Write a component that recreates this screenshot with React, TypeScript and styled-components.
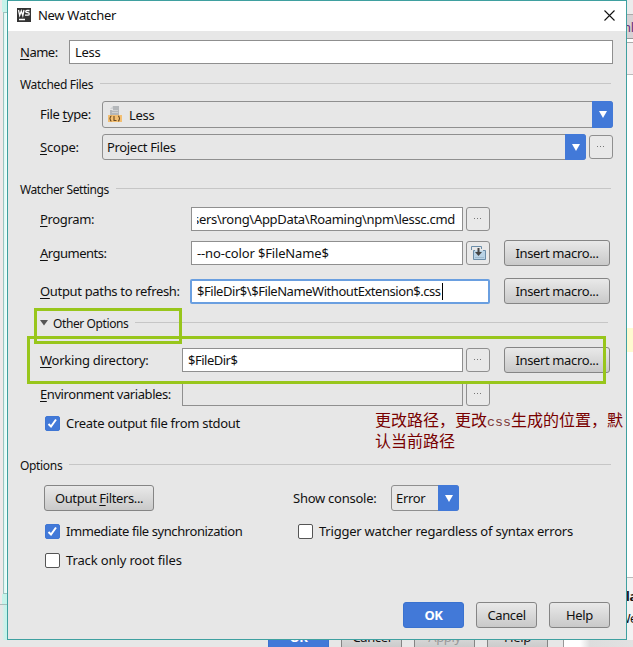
import React from 'react';
import styled, { createGlobalStyle, css } from 'styled-components';

const Global = createGlobalStyle`
  *, *::before, *::after { box-sizing: border-box; }
  body { margin: 0; overflow: hidden; background: #e7e7e7; }
`;

const Desktop = styled.div`
  width: 633px;
  height: 647px;
  overflow: hidden;
  display: grid;
  grid-template-columns: 7px 620px 6px;
  grid-template-rows: 640px 7px;
  background: #e7e7e7;
  color: #111;
  font: 13px/18px 'Noto Sans', 'Noto Sans CJK SC', sans-serif;
  letter-spacing: -0.33px;
  white-space: pre;
`;

const LeftEdge = styled.div`
  display: flex;
  flex-direction: column;
  background: #efe9ea;
`;
const LeftCap = styled.div<{ $h: number }>`
  height: ${p => p.$h}px;
  margin-left: 2px;
  background: #c6f3ea;
`;
const LeftPane = styled.div`
  flex: 1;
  margin-left: 3px;
  border: solid #9cc4bf;
  border-width: 1px 0 1px 1px;
  background: linear-gradient(90deg, #d9f8f3, #f4fefc);
`;
const LeftFoot = styled.div`
  height: 36px;
  border-top: 1px solid #a9bdba;
  background: linear-gradient(90deg, #e7e7e7 2px, #c6f3ea 5px);
`;

const RightEdge = styled.div`
  display: flex;
  flex-direction: column;
  overflow: hidden;
  background: #fff;
`;
const Strip = styled.div<{ $h: number; $bg: string; $line?: string }>`
  flex: none;
  height: ${p => p.$h}px;
  background: ${p => p.$bg};
  ${p => p.$line && css`border-bottom: 1px solid ${p.$line};`}
`;
const TabStrip = styled(Strip)`
  color: #6a2f78;
  line-height: 24px;
  text-indent: -4px;
`;
const Balloon = styled.div`
  flex: 1;
  border-top: 1px solid #bbb;
  background: #f3f3f3;
  padding-top: 8px;
  font-size: 12.5px;
  line-height: 22px;
`;
const BalloonTitle = styled.div`
  font-weight: 700;
  text-indent: -1px;
`;
const BalloonText = styled.div`
  text-indent: -8px;
`;

const Behind = styled.div`
  grid-column: 1 / -1;
  overflow: hidden;
  display: flex;
  align-items: flex-start;
  gap: 12px;
  padding-left: 268px;
  background: linear-gradient(90deg, #e7e7e7 563px, #999 563px, #999 564px, #fff 564px, #fff 580px, #ddd 590px, #e2e2e2);
`;

const Dialog = styled.main`
  position: relative;
  border: 1px solid #3fa0a0;
  background: #e7e7e7;
  display: flex;
  flex-direction: column;
`;
const TitleBar = styled.header`
  height: 30px;
  flex: none;
  padding: 0 11px 2px 9px;
  display: flex;
  align-items: center;
  background: #fff;
`;
const Title = styled.h1`
  margin: 0 auto 0 7px;
  font: inherit;
  letter-spacing: -0.3px;
`;

const Body = styled.div`
  display: flex;
  flex-direction: column;
  padding: 0 13px 0 12px;
`;
const Row = styled.div<{ $top: number; $h: number; $indent?: number; $gap?: number }>`
  display: flex;
  align-items: center;
  height: ${p => p.$h}px;
  margin-top: ${p => p.$top}px;
  padding-left: ${p => p.$indent ?? 0}px;
  gap: ${p => p.$gap ?? 0}px;
`;
const Label = styled.label<{ $w?: number; $ls?: number }>`
  flex: none;
  width: ${p => (p.$w ? `${p.$w}px` : 'auto')};
  padding-bottom: 1px;
  letter-spacing: ${p => p.$ls ?? -0.33}px;
`;
const U = styled.span`
  text-decoration: underline;
  text-underline-offset: 2px;
  text-decoration-thickness: 1px;
  text-decoration-skip-ink: none;
`;
const Heading = styled.h2<{ $ls?: number }>`
  margin: 0;
  padding-top: 1px;
  font: inherit;
  font-size: 12px;
  letter-spacing: ${p => p.$ls ?? -0.33}px;
`;
const Rule = styled.div<{ $end?: number }>`
  flex: 1;
  height: 1px;
  margin: 0 ${p => p.$end ?? 2}px 1px 7px;
  background: #c6c6c6;
`;

const Field = styled.div<{ $w: number; $focus?: boolean; $off?: boolean; $ls?: number }>`
  flex: none;
  width: ${p => p.$w}px;
  height: 24px;
  padding-left: 5px;
  display: flex;
  align-items: center;
  overflow: hidden;
  border: 1px solid #8f8f8f;
  background: ${p => (p.$off ? '#e7e7e7' : '#fff')};
  letter-spacing: ${p => p.$ls ?? -0.33}px;
  ${p => p.$focus && css`
    height: 25px;
    border: 2px solid #6a9fe0;
    border-radius: 2px;
  `}
`;
const Tail = styled(Field)`
  justify-content: flex-end;
  padding-right: 7px;
`;
const ClippedText = styled.span`
  overflow: hidden;
  display: flex;
  justify-content: flex-end;
  width: 258px;
`;
const Caret = styled.i`
  width: 1px;
  height: 17px;
  margin-left: 1px;
  background: #000;
`;
const Combo = styled.div<{ $w: number; $h: number }>`
  flex: none;
  display: flex;
  align-items: center;
  width: ${p => p.$w}px;
  height: ${p => p.$h}px;
  padding-left: 4px;
  border: 1px solid #8f8f8f;
  border-radius: 3px;
`;
const ComboArrow = styled.span`
  align-self: stretch;
  width: 21px;
  margin: -1px -1px -1px auto;
  display: grid;
  place-items: center;
  background: #4279d8;
  border-radius: 0 3px 3px 0;
`;
const SmallButton = styled.button`
  flex: none;
  width: 24px;
  height: 24px;
  padding: 0;
  display: grid;
  place-items: center;
  border: 1px solid #8f8f8f;
  border-radius: 3px;
  background: #e9e9e9;
`;
const Button = styled.button<{ $w: number; $primary?: boolean; $faded?: boolean }>`
  flex: none;
  width: ${p => p.$w}px;
  height: 26px;
  padding: 0 0 1px;
  border: 1px solid #858585;
  border-radius: 3px;
  background: linear-gradient(#e9e9e9, #c9c9c9);
  color: ${p => (p.$faded ? '#999' : '#111')};
  font: inherit;
  letter-spacing: -0.37px;
  ${p => p.$primary && css`
    border-color: #3a72cf;
    background: #4279d8;
    color: #fff;
    font-weight: 700;
  `}
`;
const HiddenButton = styled(Button)`
  margin-top: -16px;
`;
const Box = styled.span<{ $on?: boolean }>`
  flex: none;
  width: 15px;
  height: 15px;
  margin-right: 6px;
  display: grid;
  place-items: center;
  border: 1px solid ${p => (p.$on ? '#3f76d4' : '#555')};
  border-radius: 2px;
  background: ${p => (p.$on ? '#4279d8' : '#fff')};
`;
const Spacer = styled.div<{ $w: number }>`
  flex: none;
  width: ${p => p.$w}px;
`;

const Mark = styled.div<{ $x: number; $y: number; $w: number; $h: number }>`
  position: absolute;
  left: ${p => p.$x}px;
  top: ${p => p.$y}px;
  width: ${p => p.$w}px;
  height: ${p => p.$h}px;
  border: 3px solid #98c61c;
`;
const Note = styled.p`
  position: absolute;
  left: 367px;
  top: 411px;
  margin: 0;
  color: #780000;
  font: 16px/20px 'Liberation Mono', 'Noto Sans CJK SC', monospace;
  letter-spacing: 0;
`;
const Latin = styled.span`
  font-size: 13.33px;
  color: #7c3838;
`;

const LogoIcon = () => (
  <svg width="14" height="14" viewBox="0 0 14 14" fill="none" stroke="#fff" strokeWidth="1.3">
    <rect width="14" height="14" fill="#333" stroke="none" />
    <path d="M1.500 2l1.200 5.500L4.300 3l1.500 4.500L7 2M12.500 2.500H10c-1.700 0-1.700 2.200 0 2.200h.8c1.900 0 1.900 2.500 0 2.500H8M2 11.500h6" />
  </svg>
);
const CloseIcon = () => (
  <svg width="11" height="11" viewBox="0 0 11 11" stroke="#111" strokeWidth="1.1">
    <path d="M.5 .5l10 10M10.500 .5l-10 10" />
  </svg>
);
const LessIcon = () => (
  <svg width="16" height="17" viewBox="0 0 16 17" fill="none">
    <path d="M6 0h6v9H3V4h3z" fill="#b4b7ba" />
    <path d="M3 3l3-3v3z" fill="#d0d2d4" />
    <path d="M5 4.500h6M5 6.500h6" stroke="#cfd1d3" />
    <rect x="1" y="9" width="14" height="7" fill="#f3bf73" />
    <path d="M4.500 10c-2 0-.5 2.500-2 2.500 1.500 0 0 2.500 2 2.500M7 10v4.500h2.500M11 10c2 0 .5 2.500 2 2.500-1.500 0 0 2.500-2 2.500" stroke="#6b4a20" strokeWidth="1.1" />
  </svg>
);
const Down = () => (
  <svg width="8" height="7" viewBox="0 0 8 7"><path d="M0 0h8L4 7z" fill="#fff" /></svg>
);
const Dots = () => (
  <svg width="10" height="2" viewBox="0 0 10 2" fill="#777"><path d="M1 0h1v1H1zM4 0h1v1h-1zM7 0h1v1H7z" /></svg>
);
const InsertIcon = () => (
  <svg width="15" height="15" viewBox="0 0 15 15" fill="none">
    <path d="M.5 4V.5h10V3" stroke="#6b8da8" />
    <path d="M4 4.500H2.500v9h12v-9H12" stroke="#6b8da8" fill="#b9d3e6" />
    <path d="M4 11.500h9" stroke="#9fbbd0" />
    <path d="M7.500 2v4.500" stroke="#444" strokeWidth="2" />
    <path d="M4 6h7L7.500 10z" fill="#444" />
  </svg>
);
const Check = () => (
  <svg width="11" height="11" viewBox="0 0 11 11" fill="none" stroke="#fff" strokeWidth="2">
    <path d="M1.500 6l2.500 2.500L9 1.500" />
  </svg>
);
const Disclosure = styled.svg`
  margin-right: 5px;
`;

const Mnemonic = ({ text, at = 0 }: { text: string; at?: number }) => (
  <>{text.slice(0, at)}<U>{text[at]}</U>{text.slice(at + 1)}</>
);
const More = () => <SmallButton aria-label="More"><Dots /></SmallButton>;
const InsertMacro = () => <Button $w={106}>Insert macro...</Button>;

export default function App() {
  return (
    <>
      <Global />
      <Desktop>
        <LeftEdge>
          <LeftCap $h={12} />
          <LeftPane />
          <LeftCap $h={10} />
          <LeftFoot />
        </LeftEdge>

        <Dialog>
          <TitleBar>
            <LogoIcon />
            <Title>New Watcher</Title>
            <CloseIcon />
          </TitleBar>
          <Body>
            <Row $top={9} $h={24}>
              <Label $w={49} $ls={-0.5}><Mnemonic text="Name:" /></Label>
              <Field $w={544}>Less</Field>
            </Row>
            <Row $top={11} $h={18}><Heading>Watched Files</Heading><Rule /></Row>
            <Row $top={8} $h={27} $indent={20}>
              <Label $w={62}><Mnemonic text="File type:" at={5} /></Label>
              <Combo $w={511} $h={27}>
                <LessIcon />
                <Spacer $w={6} />
                Less
                <ComboArrow><Down /></ComboArrow>
              </Combo>
            </Row>
            <Row $top={6} $h={26} $indent={20}>
              <Label $w={62} $ls={-0.2}><Mnemonic text="Scope:" /></Label>
              <Combo $w={484} $h={26}>Project Files<ComboArrow><Down /></ComboArrow></Combo>
              <Spacer $w={3} />
              <More />
            </Row>

            <Row $top={20} $h={18}><Heading $ls={-0.43}>Watcher Settings</Heading><Rule /></Row>
            <Row $top={9} $h={24} $indent={20}>
              <Label $w={151}><Mnemonic text="Program:" /></Label>
              <Tail $w={272} $ls={-0.3}><ClippedText>sers\rong\AppData\Roaming\npm\lessc.cmd</ClippedText></Tail>
              <Spacer $w={3} />
              <More />
            </Row>
            <Row $top={9} $h={26} $indent={20}>
              <Label $w={151} $ls={-0.5}><Mnemonic text="Arguments:" /></Label>
              <Field $w={272} $ls={-0.15}>--no-color $FileName$</Field>
              <Spacer $w={3} />
              <SmallButton aria-label="Insert"><InsertIcon /></SmallButton>
              <Spacer $w={14} />
              <InsertMacro />
            </Row>
            <Row $top={12} $h={26} $indent={20}>
              <Label $w={150}><Mnemonic text="Output paths to refresh:" /></Label>
              <Field $w={300} $focus $ls={-0.45}>$FileDir$\$FileNameWithoutExtension$.css<Caret /></Field>
              <Spacer $w={14} />
              <InsertMacro />
            </Row>
            <Row $top={10} $h={18} $indent={20}>
              <Disclosure width="8" height="6" viewBox="0 0 8 6"><path d="M0 0h8L4 5.500z" fill="#555" /></Disclosure>
              <Heading $ls={-0.4}>Other Options</Heading>
              <Rule $end={5} />
            </Row>
            <Row $top={15} $h={26} $indent={20}>
              <Label $w={142} $ls={-0.24}><Mnemonic text="Working directory:" /></Label>
              <Field $w={281} $ls={-0.5}>$FileDir$</Field>
              <Spacer $w={3} />
              <More />
              <Spacer $w={14} />
              <InsertMacro />
            </Row>
            <Row $top={9} $h={24} $indent={20}>
              <Label $w={142} $ls={-0.42}><Mnemonic text="Environment variables:" /></Label>
              <Field $w={281} $off />
              <Spacer $w={3} />
              <More />
            </Row>
            <Row $top={8} $h={18} $indent={25}>
              <Box $on><Check /></Box>
              <Label $ls={-0.28}>Create output file from stdout</Label>
            </Row>

            <Row $top={24} $h={18}><Heading>Options</Heading><Rule /></Row>
            <Row $top={11} $h={26} $indent={24}>
              <Button $w={110}><Mnemonic text="Output Filters..." at={7} /></Button>
              <Spacer $w={139} />
              <Label $w={98} $ls={-0.25}>Show console:</Label>
              <Combo $w={68} $h={26}>Error<ComboArrow><Down /></ComboArrow></Combo>
            </Row>
            <Row $top={11} $h={18} $indent={25}>
              <Box $on><Check /></Box>
              <Label $w={232} $ls={-0.42}>Immediate file synchronization</Label>
              <Box />
              <Label $ls={-0.22}>Trigger watcher regardless of syntax errors</Label>
            </Row>
            <Row $top={11} $h={18} $indent={25}>
              <Box />
              <Label $ls={-0.13}>Track only root files</Label>
            </Row>
            <Row $top={33} $h={26} $indent={383} $gap={12}>
              <Button $w={61} $primary>OK</Button>
              <Button $w={61}>Cancel</Button>
              <Button $w={61}>Help</Button>
            </Row>
          </Body>
          <Mark $x={26} $y={307} $w={148} $h={36} />
          <Mark $x={19} $y={335} $w={579} $h={48} />
          <Note>更改路径，更改<Latin>css</Latin>生成的位置，默{'\n'}认当前路径</Note>
        </Dialog>

        <RightEdge>
          <Strip $h={15} $bg="#ececec" $line="#aaa" />
          <TabStrip $h={24} $bg="#d8d2d5" $line="#999">nl</TabStrip>
          <Strip $h={4} $bg="#fff" $line="#aaa" />
          <Strip $h={32} $bg="#f4eef0" $line="#bbb" />
          <Strip $h={253} $bg="#fff" />
          <Strip $h={24} $bg="#fffbd0" />
          <Strip $h={225} $bg="#fff" />
          <Balloon>
            <BalloonTitle>la</BalloonTitle>
            <BalloonText>We</BalloonText>
          </Balloon>
        </RightEdge>

        <Behind>
          <HiddenButton $w={61} $primary>OK</HiddenButton>
          <HiddenButton $w={61}>Cancel</HiddenButton>
          <HiddenButton $w={61} $faded>Apply</HiddenButton>
          <HiddenButton $w={61}>Help</HiddenButton>
        </Behind>
      </Desktop>
    </>
  );
}
